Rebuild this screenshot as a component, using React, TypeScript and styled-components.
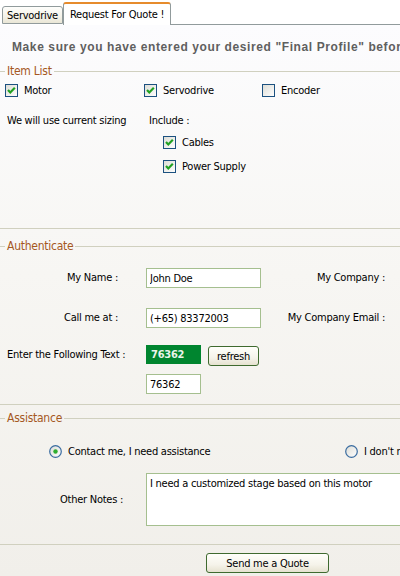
import React from 'react';
import styled, { createGlobalStyle } from 'styled-components';

const GlobalStyle = createGlobalStyle`
  html, body {
    margin: 0;
    padding: 0;
    width: 400px;
    height: 576px;
    overflow: hidden;
    background: #ffffff;
  }

  body {
    font-family: 'DejaVu Sans Condensed', 'DejaVu Sans', sans-serif;
    font-stretch: condensed;
    font-size: 11px;
    letter-spacing: -0.25px;
    color: #000;
  }

  input, textarea, button {
    font-family: 'DejaVu Sans Condensed', 'DejaVu Sans', sans-serif;
    font-stretch: condensed;
    font-size: 11px;
    letter-spacing: -0.25px;
    color: #000;
  }
`;

const Page = styled.div`
  width: 400px;
  height: 576px;
  overflow: hidden;
  display: flex;
  flex-direction: column;
`;

const TabStrip = styled.div`
  display: flex;
  align-items: flex-end;
  height: 25px;
  padding-left: 2px;
  box-sizing: border-box;
  background: #fff;
`;

const Tab = styled.div<{ $active?: boolean }>`
  box-sizing: border-box;
  height: ${(p) => (p.$active ? '23px' : '18px')};
  padding: ${(p) => (p.$active ? '4px 6px 0 6px' : '2px 4px 0 4px')};
  border: 1px solid #919b9c;
  border-bottom: ${(p) => (p.$active ? 'none' : '1px solid #919b9c')};
  border-top: ${(p) => (p.$active ? '2px solid #e68b2c' : '1px solid #919b9c')};
  border-radius: 3px 3px 0 0;
  background: ${(p) =>
    p.$active ? '#fff' : 'linear-gradient(#fefefc, #f4f2e8 60%, #e9e6d6)'};
  margin-bottom: ${(p) => (p.$active ? '0' : '1px')};
  white-space: nowrap;
  line-height: 13px;
`;

const TabFiller = styled.div`
  flex: 1;
  border-bottom: 1px solid #919b9c;
`;

const Panel = styled.div`
  flex: 1;
  width: 560px;
  background: linear-gradient(#fcfcfe, #f7f6f3 45%, #f1efea);
  display: flex;
  flex-direction: column;
`;

const Heading = styled.div`
  margin: 15px 0 0 12px;
  height: 15px;
  line-height: 15px;
  font-family: 'Liberation Sans', Arial, sans-serif;
  font-stretch: normal;
  font-weight: bold;
  font-size: 12px;
  letter-spacing: 0.6px;
  color: #5f5f5f;
  white-space: nowrap;
`;

const Group = styled.fieldset<{ $top: number; $bottom: number }>`
  margin: ${(p) => p.$top}px 0 0 0;
  padding: 0 0 ${(p) => p.$bottom}px 0;
  border: none;
  border-top: 1px solid #d0d0bf;
  border-bottom: 1px solid #d0d0bf;
  min-width: 0;
`;

const Legend = styled.legend`
  margin-left: 5px;
  padding: 0 2px;
  color: #a5581f;
  font-size: 12px;
  line-height: 14px;
`;

const CheckRow = styled.div`
  display: grid;
  grid-template-columns: 139px 118px auto;
  padding: 6px 0 0 5px;
`;

const CheckItem = styled.label`
  display: flex;
  align-items: center;
  gap: 6px;
  height: 13px;
  white-space: nowrap;
`;

const SizingRow = styled.div`
  display: grid;
  grid-template-columns: 142px auto;
  padding: 17px 0 0 7px;
`;

const PlainText = styled.div`
  line-height: 14px;
  white-space: nowrap;
`;

const IncludeList = styled.div`
  display: flex;
  flex-direction: column;
  gap: 11px;
  padding: 8px 0 0 14px;
`;

const FormGrid = styled.div`
  display: grid;
  grid-template-columns: 146px 115px 139px;
  grid-template-rows: 40px 37px 29px 20px;
  align-items: start;
  padding-top: 15px;
`;

const Label = styled.div<{ $left?: boolean; $pad: number }>`
  height: 20px;
  line-height: 20px;
  text-align: ${(p) => (p.$left ? 'left' : 'right')};
  padding: ${(p) => (p.$left ? `0 0 0 ${p.$pad}px` : `0 ${p.$pad}px 0 0`)};
  white-space: nowrap;
`;

const Cell = styled.div`
  display: flex;
  align-items: flex-start;
  gap: 7px;
`;

const TextInput = styled.input<{ $width: number }>`
  box-sizing: border-box;
  width: ${(p) => p.$width}px;
  height: 20px;
  border: 1px solid #a5bf8f;
  background: #fff;
  padding: 0 3px;
  outline: none;
`;

const Captcha = styled.div`
  box-sizing: border-box;
  width: 55px;
  height: 19px;
  background: #00852f;
  color: #eaf3ea;
  font-weight: bold;
  line-height: 19px;
  padding-left: 5px;
`;

const Button = styled.button<{ $width: number }>`
  box-sizing: border-box;
  width: ${(p) => p.$width}px;
  height: 20px;
  margin-top: 1px;
  border: 1px solid #3f6a2f;
  border-radius: 3px;
  background: linear-gradient(#fffffb, #f5f3ea 60%, #e6e2d0);
  padding: 0;
`;

const RadioRow = styled.div`
  display: grid;
  grid-template-columns: 296px auto;
  padding: 20px 0 0 49px;
`;

const RadioItem = styled.label`
  display: flex;
  align-items: center;
  gap: 6px;
  height: 13px;
  white-space: nowrap;
`;

const NotesRow = styled.div`
  display: grid;
  grid-template-columns: 146px auto;
  padding-top: 15px;
`;

const NotesLabel = styled.div`
  display: flex;
  align-items: center;
  padding-left: 60px;
  white-space: nowrap;
`;

const Notes = styled.textarea`
  box-sizing: border-box;
  width: 330px;
  height: 53px;
  border: 1px solid #a5bf8f;
  background: #fff;
  padding: 3px 3px;
  line-height: 14px;
  resize: none;
  outline: none;
`;

const Footer = styled.div`
  padding: 7px 0 0 206px;
`;

const CheckBox = ({ checked }: { checked: boolean }) => (
  <svg width="13" height="13" viewBox="0 0 13 13">
    <defs>
      <linearGradient id="cbg" x1="0" y1="0" x2="1" y2="1">
        <stop offset="0" stopColor="#dcdcd5" />
        <stop offset="1" stopColor="#ffffff" />
      </linearGradient>
    </defs>
    <rect x="0.5" y="0.5" width="12" height="12" fill="url(#cbg)" stroke="#1c5180" />
    {checked && (
      <polyline
        points="3,6 5.3,8.4 9.8,3.8"
        fill="none"
        stroke="#21a121"
        strokeWidth="2.2"
      />
    )}
  </svg>
);

const Radio = ({ checked }: { checked: boolean }) => (
  <svg width="13" height="13" viewBox="0 0 13 13">
    <defs>
      <linearGradient id="rbg" x1="0" y1="0" x2="1" y2="1">
        <stop offset="0" stopColor="#dcdcd5" />
        <stop offset="1" stopColor="#ffffff" />
      </linearGradient>
    </defs>
    <circle cx="6.5" cy="6.5" r="5.8" fill="url(#rbg)" stroke="#3a6ca0" strokeWidth="1.2" />
    {checked && <circle cx="6.5" cy="6.5" r="2.2" fill="#2fad2f" />}
  </svg>
);

const App: React.FC = () => {
  return (
    <>
      <GlobalStyle />
      <Page>
        <TabStrip>
          <Tab>Servodrive</Tab>
          <Tab $active>Request For Quote !</Tab>
          <TabFiller />
        </TabStrip>

        <Panel>
          <Heading>
            Make sure you have entered your desired "Final Profile" before requesting a quote
          </Heading>

          <Group $top={9} $bottom={55}>
            <Legend>Item List</Legend>
            <CheckRow>
              <CheckItem>
                <CheckBox checked />
                Motor
              </CheckItem>
              <CheckItem>
                <CheckBox checked />
                Servodrive
              </CheckItem>
              <CheckItem>
                <CheckBox checked={false} />
                Encoder
              </CheckItem>
            </CheckRow>
            <SizingRow>
              <PlainText>We will use current sizing</PlainText>
              <div>
                <PlainText>Include :</PlainText>
                <IncludeList>
                  <CheckItem>
                    <CheckBox checked />
                    Cables
                  </CheckItem>
                  <CheckItem>
                    <CheckBox checked />
                    Power Supply
                  </CheckItem>
                </IncludeList>
              </div>
            </SizingRow>
          </Group>

          <Group $top={10} $bottom={10}>
            <Legend>Authenticate</Legend>
            <FormGrid>
              <Label $pad={28}>My Name :</Label>
              <Cell>
                <TextInput $width={115} defaultValue="John Doe" />
              </Cell>
              <Label $pad={15}>My Company :</Label>

              <Label $pad={28}>Call me at :</Label>
              <Cell>
                <TextInput $width={115} defaultValue="(+65) 83372003" />
              </Cell>
              <Label $pad={15}>My Company Email :</Label>

              <Label $left $pad={7}>Enter the Following Text :</Label>
              <Cell>
                <Captcha>76362</Captcha>
                <Button $width={51}>refresh</Button>
              </Cell>
              <div />

              <div />
              <Cell>
                <TextInput $width={55} defaultValue="76362" />
              </Cell>
              <div />
            </FormGrid>
          </Group>

          <Group $top={6} $bottom={18}>
            <Legend>Assistance</Legend>
            <RadioRow>
              <RadioItem>
                <Radio checked />
                Contact me, I need assistance
              </RadioItem>
              <RadioItem>
                <Radio checked={false} />
                I don't need assistance
              </RadioItem>
            </RadioRow>
            <NotesRow>
              <NotesLabel>Other Notes :</NotesLabel>
              <Notes defaultValue="I need a customized stage based on this motor" />
            </NotesRow>
          </Group>

          <Footer>
            <Button $width={123}>Send me a Quote</Button>
          </Footer>
        </Panel>
      </Page>
    </>
  );
};

export default App;
